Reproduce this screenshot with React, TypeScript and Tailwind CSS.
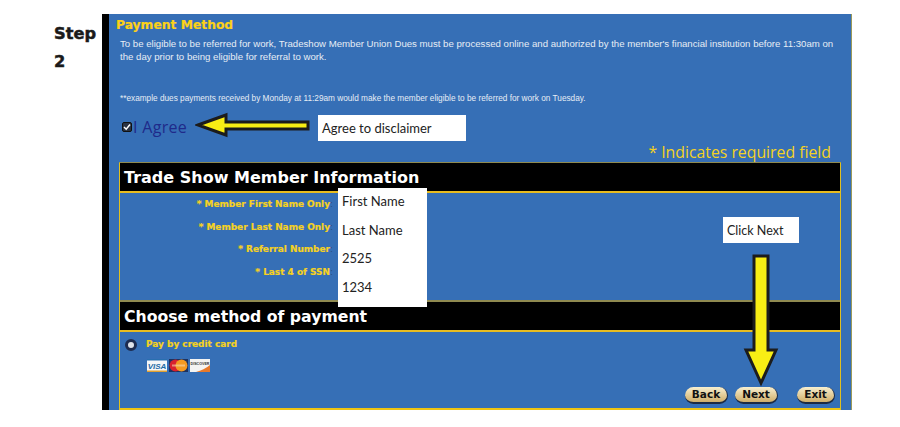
const verdana = "font-['DejaVu_Sans',sans-serif]"

function CardIcons() {
  return (
    <div className="flex gap-[2px] mt-[6px] ml-[27px]">
      <svg width="20" height="13" viewBox="0 0 20 13">
        <rect width="20" height="13" fill="#f4f6f8" />
        <rect y="0" width="20" height="1.5" fill="#2a6fb0" />
        <rect y="11.5" width="20" height="1.5" fill="#e0a030" />
        <text x="10" y="9.6" textAnchor="middle" fontSize="8" fontWeight="700" fontStyle="italic" fill="#1c6aa6" fontFamily="Liberation Sans">VISA</text>
      </svg>
      <svg width="19" height="13" viewBox="0 0 19 13">
        <rect width="19" height="13" fill="#1d3260" />
        <circle cx="6.5" cy="6.5" r="6" fill="#d8202e" />
        <circle cx="12.5" cy="6.5" r="6" fill="#f39a22" />
        <rect x="3" y="5.5" width="13" height="2" fill="#f6d8b0" opacity="0.6" />
      </svg>
      <svg width="20" height="13" viewBox="0 0 20 13">
        <rect width="20" height="13" fill="#f4f4f2" />
        <path d="M20 6 L20 13 L6 13 Q14 11 20 6 Z" fill="#e8792a" />
        <text x="10" y="6" textAnchor="middle" fontSize="3.6" fontWeight="700" fill="#333" fontFamily="Liberation Sans">DISCOVER</text>
      </svg>
    </div>
  )
}

function Button({ label, className }: { label: string; className: string }) {
  return (
    <div className={`h-[17px] flex items-center justify-center rounded-full bg-gradient-to-b from-[#f8efcf] to-[#cfae68] border-b-2 border-r border-[#1c2a44] text-[10.5px] font-bold text-[#111] ${verdana} ${className}`}>
      {label}
    </div>
  )
}

function FieldLabel({ text }: { text: string }) {
  return (
    <div className={`h-[22.4px] flex items-center justify-end text-[8.95px] font-bold text-[#f5d21f] [-webkit-text-stroke:0.2px_#f5d21f] ${verdana}`}>
      {text}
      <span className="text-[#2b4f80] font-normal [-webkit-text-stroke:0]">:</span>
    </div>
  )
}

export default function App() {
  return (
    <div className="relative w-[900px] h-[427px] bg-white overflow-hidden pt-[14px] flex">
      <div className={`w-[102px] pl-[54px] pt-[6px] text-[16.2px] font-bold leading-[28px] text-[#1a1a1a] [-webkit-text-stroke:0.5px_#1a1a1a] ${verdana}`}>
        <div>Step</div>
        <div>2</div>
      </div>

      <div className="w-[750px] h-[396px] bg-[#366fb6] border-l-[7px] border-black border-r border-r-[#9a9a5a] flex flex-col">
        <div className={`ml-[7px] mt-[3px] h-[17px] text-[12.3px] leading-[17px] font-bold text-[#fcd116] [-webkit-text-stroke:0.2px_#fcd116] ${verdana}`}>
          Payment Method
        </div>
        <p className="ml-[11px] mt-[3px] w-[725px] text-[9.65px] leading-[13px] text-[#e6edf5] font-['Liberation_Sans',sans-serif]">
          To be eligible to be referred for work, Tradeshow Member Union Dues must be processed online and authorized by the member's financial institution before 11:30am on the day prior to being eligible for referral to work.
        </p>
        <p className="ml-[11px] mt-[30px] text-[8.26px] leading-[12px] text-[#e6edf5] font-['Liberation_Sans',sans-serif]">
          **example dues payments received by Monday at 11:29am would make the member eligible to be referred for work on Tuesday.
        </p>
        <div className="ml-[13px] mt-[12px] h-[20px] flex items-center">
          <span className="w-[10px] h-[10px] rounded-[2px] bg-[#2a3344] border border-[#111] flex items-center justify-center">
            <svg width="8" height="8" viewBox="0 0 8 8">
              <path d="M1 4 L3.2 6.2 L7 1.5" fill="none" stroke="#fff" strokeWidth="1.5" />
            </svg>
          </span>
          <span className="ml-[1px] text-[16px] tracking-[0.3px] text-[#1f2a8a] font-['Open_Sans',sans-serif]">I Agree</span>
        </div>
        <div className="mr-[20px] mt-[6px] h-[19px] text-right text-[15.8px] leading-[19px] text-[#f5d21f] font-['Open_Sans',sans-serif]">
          * Indicates required field
        </div>

        <div className="ml-[10px] mr-[10px] h-[248px] border-x border-x-[#e0c020] border-t border-t-[#8f8a50] border-b-2 border-b-[#eec414] flex flex-col">
          <div className={`h-[28px] shrink-0 bg-black pl-[4px] text-[16px] leading-[29px] font-bold text-white ${verdana}`}>
            Trade Show Member Information
          </div>
          <div className="h-[111px] shrink-0 border-t-2 border-t-[#e8bc20] border-b-2 border-b-[#8f8a50] pt-[1px]">
            <div className="w-[213px]">
              <FieldLabel text="* Member First Name Only" />
              <FieldLabel text="* Member Last Name Only" />
              <FieldLabel text="* Referral Number" />
              <FieldLabel text="* Last 4 of SSN" />
            </div>
          </div>
          <div className={`h-[28px] shrink-0 bg-black pl-[4px] text-[15.7px] leading-[30px] font-bold text-white ${verdana}`}>
            Choose method of payment
          </div>
          <div className="flex-1 border-t-2 border-t-[#e8bc20] pt-[5px] relative">
            <div className="flex items-center h-[16px]">
              <span className="ml-[5px] w-[12px] h-[12px] rounded-full bg-[#dfe3ea] border-[3px] border-[#1d2c50]" />
              <span className={`ml-[9px] text-[8.95px] font-bold text-[#f5d21f] [-webkit-text-stroke:0.2px_#f5d21f] ${verdana}`}>Pay by credit card</span>
            </div>
            <CardIcons />
            <div className="absolute bottom-[4px] left-[565px] flex">
              <Button label="Back" className="w-[43px]" />
              <Button label="Next" className="w-[43px] ml-[7px]" />
              <Button label="Exit" className="w-[38px] ml-[19px]" />
            </div>
          </div>
        </div>
      </div>

      {/* callouts pasted over the screenshot */}
      <div className="absolute left-[318px] top-[115px] w-[148px] h-[26px] bg-white pl-[4px] text-[13px] leading-[27px] text-[#222] font-['Lato',sans-serif]">
        Agree to disclaimer
      </div>
      <div className="absolute left-[338px] top-[188px] w-[89px] h-[119px] bg-white pl-[4px] pt-[4px] text-[13px] text-[#222] font-['Lato',sans-serif]">
        <div className="h-[28.5px] leading-[18px]">First Name</div>
        <div className="h-[28.5px] leading-[18px]">Last Name</div>
        <div className="h-[28.5px] leading-[18px]">2525</div>
        <div className="leading-[18px]">1234</div>
      </div>
      <div className="absolute left-[723px] top-[217px] w-[76px] h-[26px] bg-white pl-[4px] text-[12.5px] leading-[27px] text-[#222] font-['Lato',sans-serif]">
        Click Next
      </div>

      <svg className="absolute left-[195px] top-[112px]" width="116" height="26" viewBox="0 0 116 26">
        <path d="M3 13 L31 3 L31 10 L113 10 L113 17 L31 17 L31 23 Z" fill="#f8ee14" stroke="#1c1c1c" strokeWidth="3" />
      </svg>
      <svg className="absolute left-[743px] top-[254px]" width="36" height="134" viewBox="0 0 36 134">
        <path d="M11 2 L25 2 L25 96 L33 96 L18 129 L3 96 L11 96 Z" fill="#f8ee14" stroke="#1c1c1c" strokeWidth="3" />
      </svg>
    </div>
  )
}
